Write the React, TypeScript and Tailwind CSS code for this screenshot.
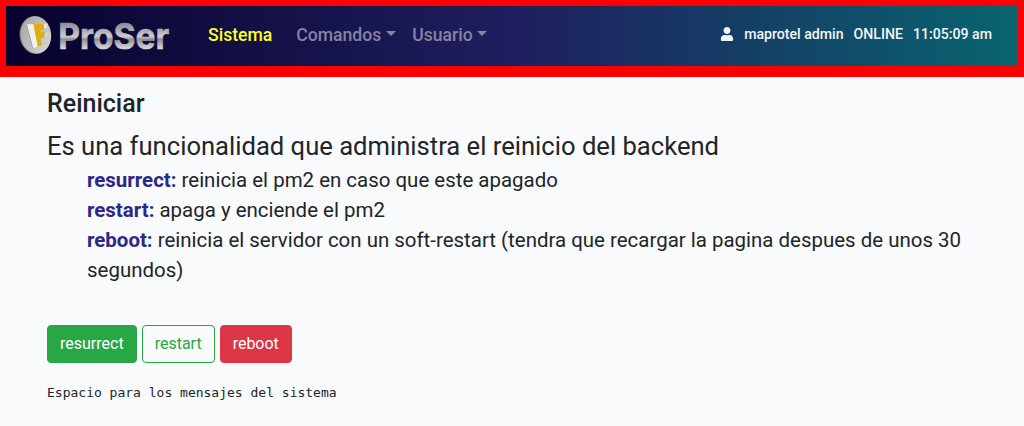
import { FaUser } from "react-icons/fa";

function Logo() {
  return (
    <svg width="156" height="58" viewBox="0 -8 156 58" className="block overflow-visible" role="img" aria-label="ProSer">
      <defs>
        <linearGradient id="metal" x1="0" y1="6" x2="0" y2="34" gradientUnits="userSpaceOnUse">
          <stop offset="0" stopColor="#85858d" />
          <stop offset="0.25" stopColor="#a0a0a8" />
          <stop offset="0.55" stopColor="#ccccd0" />
          <stop offset="0.66" stopColor="#8f8f97" />
          <stop offset="0.82" stopColor="#b4b4ba" />
          <stop offset="1" stopColor="#dadade" />
        </linearGradient>
        <linearGradient id="disc" x1="0" y1="0" x2="1" y2="1">
          <stop offset="0" stopColor="#a2a2a0" />
          <stop offset="0.6" stopColor="#c2c2c0" />
          <stop offset="1" stopColor="#dededc" />
        </linearGradient>
      </defs>
      <g transform="rotate(-7 17.3 20)">
        <ellipse cx="17.3" cy="20" rx="15.8" ry="19" fill="#77777b" />
        <ellipse cx="17.9" cy="20" rx="15.2" ry="18.7" fill="url(#disc)" />
      </g>
      <path d="M7.5 9.5L15.5 9L20 31.5L14 34Z" fill="#f0f0ee" />
      <path d="M7.5 9.5L9 9.4L15.3 33.5L14 34Z" fill="#a4a4a4" />
      <path d="M15.5 9H25V10H26.5V14L22.5 15V17.5L27 17L26 22.5L22.5 23L24 30L19.8 31.5Z" fill="#dfad0e" />
      <path d="M26 9L30 8.5L29 13L26 13.5Z" fill="#e0e0de" />
      <path d="M27 17.2L30.5 17L29.5 21.5L26.2 22Z" fill="#d3d3d1" />
      <text x="40.3" y="33.6" textLength="111" lengthAdjust="spacingAndGlyphs" fill="url(#metal)" stroke="url(#metal)" strokeWidth="0.7" className="font-['Inter',sans-serif] text-[36px] font-bold">ProSer</text>
    </svg>
  );
}

function Caret() {
  return <span className="mb-1 ml-[4.5px] inline-block border-x-[5.3px] border-t-[5.3px] border-x-transparent border-t-current" />;
}

function Navbar() {
  return (
    <header className="flex h-[77px] items-center justify-between border-x-6 border-t-6 border-b-11 border-[#ff0000] bg-[linear-gradient(90deg,#07022d_0%,#1f1e5e_50%,#08656f_100%)] bg-origin-border pr-[26px] pl-3">
      <div className="flex items-center">
        <Logo />
        <nav className="mb-px ml-[34px] flex items-center text-[17.6px] leading-[27px] font-medium text-[#8684a3]">
          <a className="mr-6 text-[#ffff20]">Sistema</a>
          <a className="mr-[16.3px] flex items-center">Comandos<Caret /></a>
          <a className="flex items-center">Usuario<Caret /></a>
        </nav>
      </div>
      <div className="mb-1 flex items-center gap-[10px] text-[14.13px] leading-[21px] font-medium text-[#f4f7f8]">
        <FaUser size={14} />
        <span>maprotel admin</span>
        <span>ONLINE</span>
        <span>11:05:09 am</span>
      </div>
    </header>
  );
}

const commands = [
  { name: "resurrect:", text: "reinicia el pm2 en caso que este apagado" },
  { name: "restart:", text: "apaga y enciende el pm2" },
  { name: "reboot:", text: "reinicia el servidor con un soft-restart (tendra que recargar la pagina despues de unos 30 segundos)" },
];

export default function App() {
  return (
    <div className="min-h-screen bg-[#f8fafc] font-['Roboto',sans-serif] text-[#212529]">
      <Navbar />
      <main className="px-[47px] pt-3">
        <h1 className="text-[25px] leading-[29px] font-medium">Reiniciar</h1>
        <p className="mt-[9px] text-[25.6px] leading-[38px]">Es una funcionalidad que administra el reinicio del backend</p>
        <div className="ml-10 text-[20.47px] leading-[30px]">
          {commands.map((c) => (
            <p key={c.name}>
              <b className="font-bold text-[#2e2787]">{c.name}</b> {c.text}
            </p>
          ))}
        </div>
        <div className="mt-10 flex gap-[5px] text-[16px] leading-6">
          <button className="rounded-[4px] border border-[#28a745] bg-[#28a745] px-3 py-[6px] text-white">resurrect</button>
          <button className="rounded-[4px] border border-[#28a745] px-3 py-[6px] text-[#28a745]">restart</button>
          <button className="rounded-[4px] border border-[#dc3545] bg-[#dc3545] px-3 py-[6px] text-white">reboot</button>
        </div>
        <pre className="mt-5 font-['DejaVu_Sans_Mono',monospace] text-[13px] leading-5">Espacio para los mensajes del sistema</pre>
      </main>
    </div>
  );
}
